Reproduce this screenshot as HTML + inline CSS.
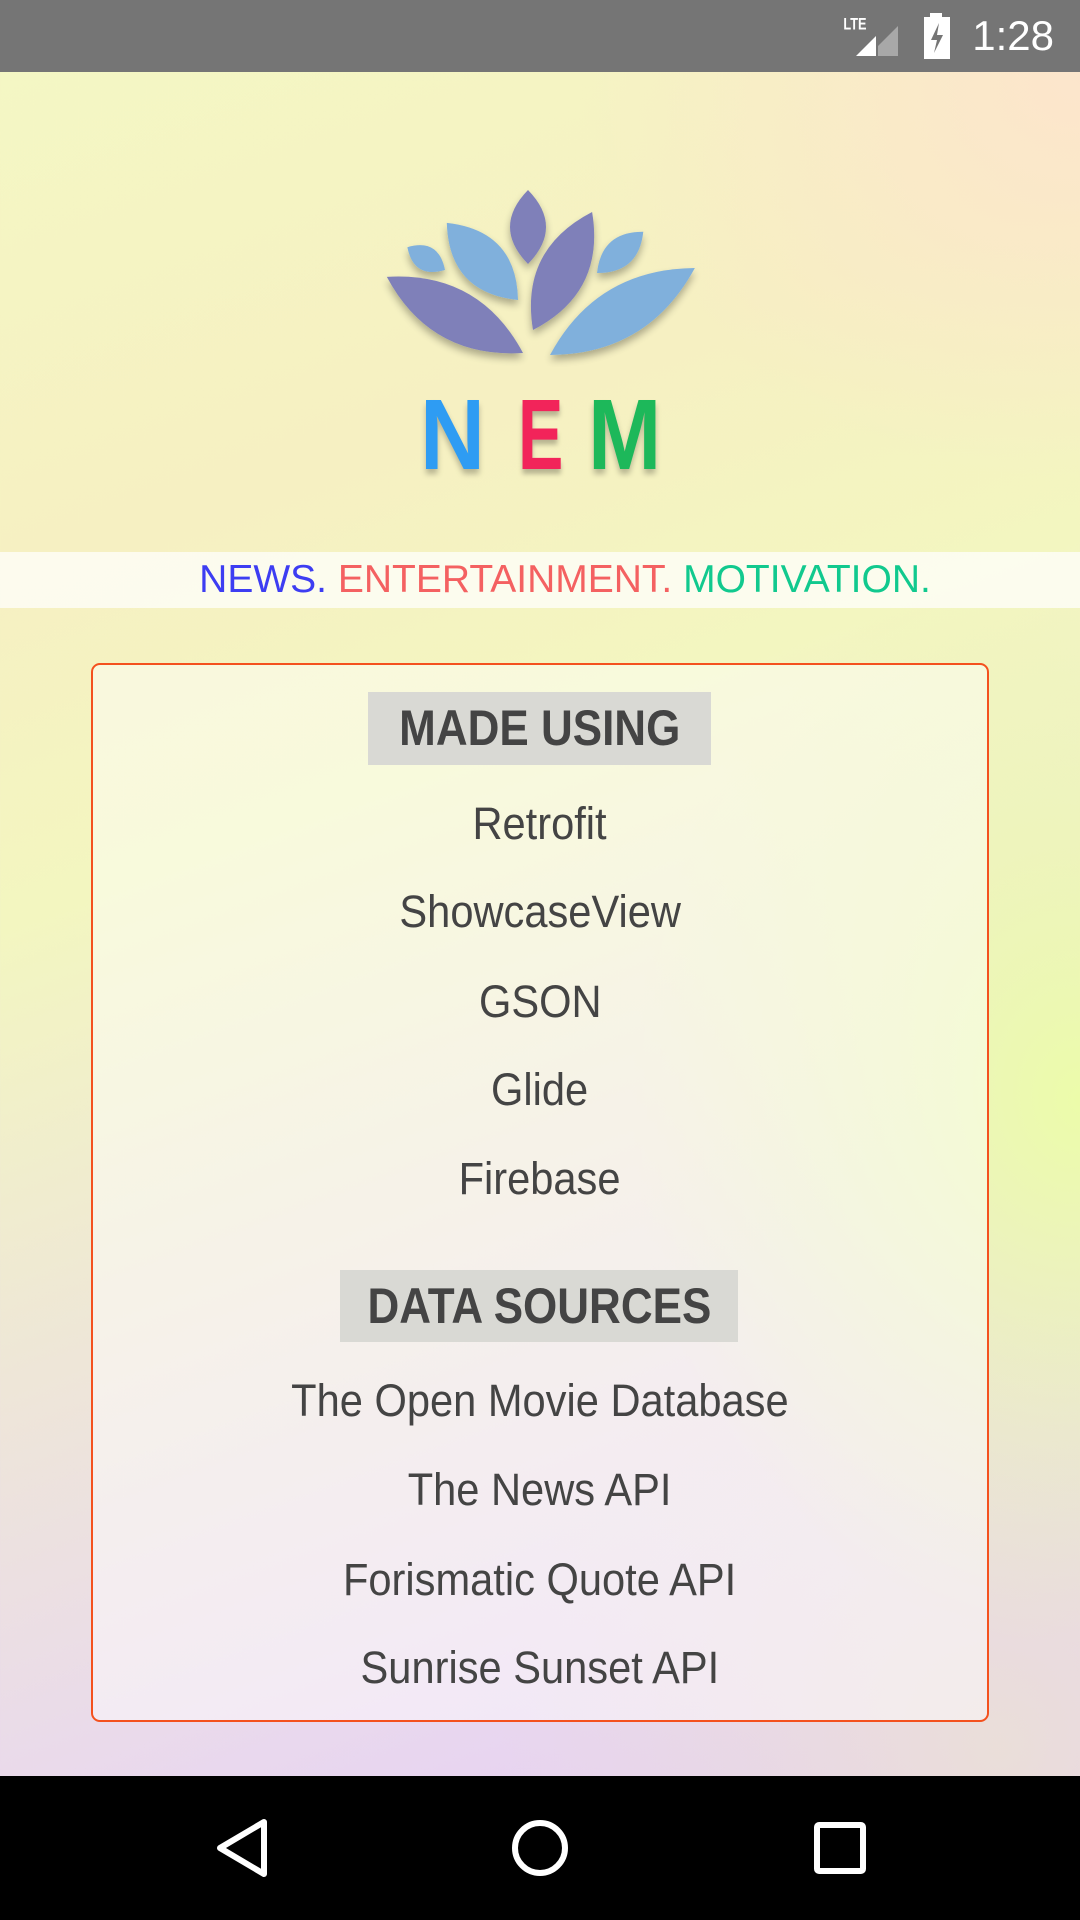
<!DOCTYPE html>
<html><head><meta charset="utf-8"><style>
*{margin:0;padding:0;box-sizing:border-box}
html,body{width:1080px;height:1920px;overflow:hidden}
body{position:relative;font-family:"Liberation Sans",sans-serif;
background:linear-gradient(160deg,#f4f8c4 0%,#f6f0c2 25%,#f3f6c0 40%,#eee6d8 60%,#e9d8ee 80%,#e2c8f8 100%);}
.bg2{position:absolute;left:0;top:0;width:1080px;height:1920px;
background:radial-gradient(ellipse 500px 400px at 1080px 80px,rgba(253,228,205,.9),rgba(253,228,205,0)),
radial-gradient(ellipse 450px 550px at 1080px 1100px,rgba(236,252,170,1),rgba(236,252,170,0)),
radial-gradient(ellipse 500px 500px at 1000px 1750px,rgba(236,226,210,.8),rgba(236,226,210,0));}
.status{position:absolute;left:0;top:0;width:1080px;height:72px;background:#757575}
.time{position:absolute;right:26px;top:12px;color:#fff;font-size:42px}
.tag{position:absolute;left:0;top:552px;width:1080px;height:56px;background:rgba(255,255,255,.72);text-align:center;font-size:39px;line-height:56px;padding-left:50px}
.box{position:absolute;left:91px;top:663px;width:898px;height:1059px;border:2.5px solid #f4511e;border-radius:9px;background:rgba(255,255,255,.45)}
.lbl{position:absolute;background:#d9d9d4;color:#444;font-weight:bold;font-size:50px;text-align:center;overflow:hidden}
.lbl span{display:inline-block;transform:scaleX(.88)}
.it{position:absolute;left:0;width:1080px;text-align:center;color:#444;font-size:45px;line-height:50px}
.it span{display:inline-block;transform:scaleX(.925)}
.nav{position:absolute;left:0;top:1776px;width:1080px;height:144px;background:#000}
.nem{position:absolute;top:385px;font-family:"Liberation Sans",sans-serif;font-weight:bold;font-size:100px;line-height:100px;text-shadow:0 5px 6px rgba(0,0,0,.25);transform-origin:left top}
</style></head><body>
<div class="bg2"></div>
<div class="status">
<svg style="position:absolute;left:840px;top:12px" width="60" height="46" viewBox="0 0 60 46">
<text x="4" y="16" fill="#fff" font-family="Liberation Sans,sans-serif" font-weight="bold" font-size="15" transform="scale(.85,1.1)">LTE</text>
<polygon points="16,44 36,44 36,24" fill="#fff"/><polygon points="38,44 58,44 58,14 38,34" fill="#a8a8a8"/></svg>
<svg style="position:absolute;left:922px;top:13px" width="30" height="46" viewBox="0 0 30 46">
<rect x="8" y="0" width="12" height="5" fill="#fff"/><rect x="2" y="4" width="26" height="42" fill="#fff"/>
<polygon points="17,10 9,27 15,27 12,40 21,22 15,22" fill="#757575"/></svg>
<div class="time">1:28</div>
</div>
<svg style="position:absolute;left:0;top:0" width="1080" height="400" viewBox="0 0 1080 400">
<defs><filter id="sh" x="-20%" y="-20%" width="140%" height="160%"><feGaussianBlur in="SourceAlpha" stdDeviation="4"/><feOffset dy="5"/><feComponentTransfer><feFuncA type="linear" slope=".3"/></feComponentTransfer><feMerge><feMergeNode/><feMergeNode in="SourceGraphic"/></feMerge></filter></defs>
<g filter="url(#sh)">
<path d="M0,0 Q37,-36 74,0 Q37,36 0,0Z" fill="#7f80b9" transform="translate(528,190) rotate(90)"/>
<path d="M0,0 Q22,-24 44,0 Q22,24 0,0Z" fill="#80b0dc" transform="translate(445,270) rotate(-148.8)"/>
<path d="M0,0 Q31,-28 62,0 Q31,28 0,0Z" fill="#80b0dc" transform="translate(597,273) rotate(-41.7)"/>
<path d="M0,0 Q52,-46 105,0 Q52,46 0,0Z" fill="#80b0dc" transform="translate(518,300) rotate(-132.7)"/>
<path d="M0,0 Q66,-48 132,0 Q66,48 0,0Z" fill="#7f80b9" transform="translate(533,330) rotate(-63.4)"/>
<path d="M0,0 Q78,-50 156,0 Q78,50 0,0Z" fill="#7f80b9" transform="translate(523,353) rotate(-150.8)"/>
<path d="M0,0 Q84,-50 169,0 Q84,50 0,0Z" fill="#80b0dc" transform="translate(550,355) rotate(-31)"/>
</g></svg>
<div class="nem" style="left:420px;color:#2e9cf3;transform:scaleX(.9)">N</div>
<div class="nem" style="left:518px;color:#f2245a;transform:scaleX(.68)">E</div>
<div class="nem" style="left:588px;color:#1db85a;transform:scaleX(.88)">M</div>
<div class="tag"><span style="color:#3d3df2">NEWS.</span> <span style="color:#f46161">ENTERTAINMENT.</span> <span style="color:#11c98e">MOTIVATION.</span></div>
<div class="box"></div>
<div class="lbl" style="left:368px;top:692px;width:343px;height:73px;line-height:73px"><span>MADE USING</span></div>
<div class="it" style="top:799px"><span>Retrofit</span></div>
<div class="it" style="top:887px"><span>ShowcaseView</span></div>
<div class="it" style="top:977px"><span>GSON</span></div>
<div class="it" style="top:1065px"><span>Glide</span></div>
<div class="it" style="top:1154px"><span>Firebase</span></div>
<div class="lbl" style="left:340px;top:1270px;width:398px;height:72px;line-height:72px"><span>DATA SOURCES</span></div>
<div class="it" style="top:1376px"><span>The Open Movie Database</span></div>
<div class="it" style="top:1465px"><span>The News API</span></div>
<div class="it" style="top:1555px"><span>Forismatic Quote API</span></div>
<div class="it" style="top:1643px"><span>Sunrise Sunset API</span></div>
<div class="nav">
<svg width="1080" height="144" viewBox="0 0 1080 144">
<polygon points="264,46 264,98 220,72" fill="none" stroke="#fff" stroke-width="6" stroke-linejoin="round"/>
<circle cx="540" cy="72" r="25" fill="none" stroke="#fff" stroke-width="6"/>
<rect x="817" y="49" width="46" height="46" rx="2" fill="none" stroke="#fff" stroke-width="6"/>
</svg></div>
</body></html>
